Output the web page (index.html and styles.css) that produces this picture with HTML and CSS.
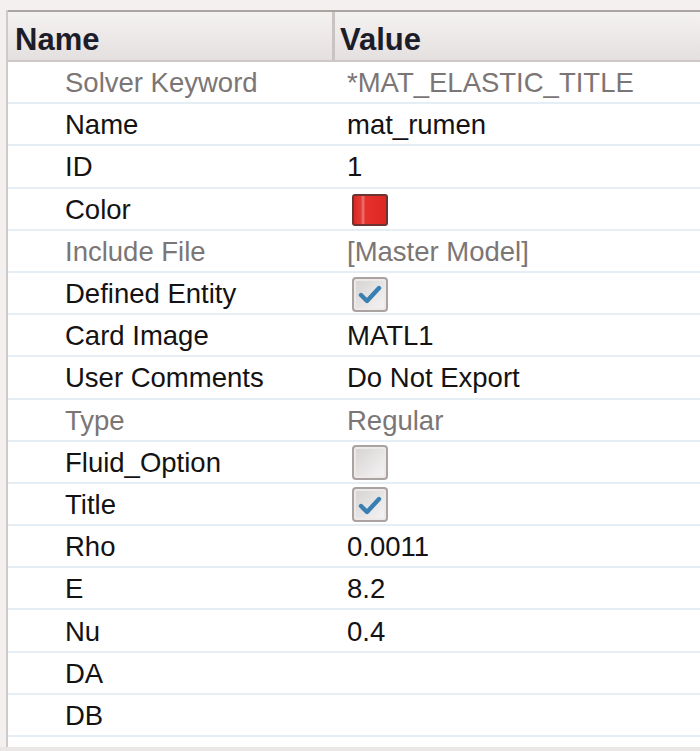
FILE: index.html
```html
<!DOCTYPE html>
<html>
<head>
<meta charset="utf-8">
<link rel="stylesheet" href="styles.css">
</head>
<body>
<div class="frame">
  <div class="panel">
    <div class="header">
      <div class="hcell hname">Name</div>
      <div class="hcell hvalue">Value</div>
    </div>
    <div class="row dim"><div class="name">Solver Keyword</div><div class="value">*MAT_ELASTIC_TITLE</div></div>
    <div class="row"><div class="name">Name</div><div class="value">mat_rumen</div></div>
    <div class="row"><div class="name">ID</div><div class="value">1</div></div>
    <div class="row"><div class="name">Color</div><div class="value"><span class="swatch"></span></div></div>
    <div class="row dim"><div class="name">Include File</div><div class="value">[Master Model]</div></div>
    <div class="row"><div class="name">Defined Entity</div><div class="value"><span class="check"><svg viewBox="0 0 24 24" width="24" height="24"><path d="M3 13 L9 19 L21 6" fill="none" stroke="#3a7fb2" stroke-width="4.4" stroke-linecap="round" stroke-linejoin="round"/></svg></span></div></div>
    <div class="row"><div class="name">Card Image</div><div class="value">MATL1</div></div>
    <div class="row"><div class="name">User Comments</div><div class="value">Do Not Export</div></div>
    <div class="row dim"><div class="name">Type</div><div class="value">Regular</div></div>
    <div class="row"><div class="name">Fluid_Option</div><div class="value"><span class="check"></span></div></div>
    <div class="row"><div class="name">Title</div><div class="value"><span class="check"><svg viewBox="0 0 24 24" width="24" height="24"><path d="M3 13 L9 19 L21 6" fill="none" stroke="#3a7fb2" stroke-width="4.4" stroke-linecap="round" stroke-linejoin="round"/></svg></span></div></div>
    <div class="row"><div class="name">Rho</div><div class="value">0.0011</div></div>
    <div class="row"><div class="name">E</div><div class="value">8.2</div></div>
    <div class="row"><div class="name">Nu</div><div class="value">0.4</div></div>
    <div class="row"><div class="name">DA</div><div class="value"></div></div>
    <div class="row"><div class="name">DB</div><div class="value"></div></div>
  </div>
</div>
</body>
</html>
```
FILE: styles.css
```css
html, body {
  margin: 0;
  padding: 0;
  background: #ebe7e6;
  overflow: hidden;
}
body {
  width: 700px;
  height: 751px;
  font-family: "Liberation Sans", Arial, sans-serif;
}
.frame {
  padding-top: 10px;
  padding-left: 6px;
  background: #f3f0ef;
  height: 737px;
}
.panel {
  width: 720px;
  height: 737px;
  background: #ffffff;
  border-left: 2px solid #cfcac8;
  box-sizing: border-box;
}
.header {
  display: flex;
  height: 52px;
  box-sizing: border-box;
  border-top: 2px solid #aaa4a2;
  border-bottom: 2px solid #cdc8c6;
  background: linear-gradient(#f4f2f1, #e4e0df);
}
.hcell {
  display: flex;
  align-items: center;
  padding-top: 8px;
  font-weight: bold;
  font-size: 31px;
  color: #1d1d2a;
  box-sizing: border-box;
}
.hname {
  width: 327px;
  padding-left: 7px;
  border-right: 3px solid #c9c4c2;
}
.hvalue {
  padding-left: 5px;
}
.row {
  display: flex;
  height: 42.2px;
  box-sizing: border-box;
  border-bottom: 2px solid #e5edf5;
  font-size: 27.5px;
  color: #141212;
  padding-top: 2px;
}
.row.dim {
  color: #7b7675;
}
.name {
  width: 330px;
  padding-left: 57px;
  display: flex;
  align-items: center;
  box-sizing: border-box;
}
.value {
  padding-left: 9px;
  display: flex;
  align-items: center;
  flex: 1;
}
.swatch {
  display: block;
  width: 36px;
  height: 32px;
  margin-left: 5px;
  box-sizing: border-box;
  border: 2px solid #6b3431;
  border-radius: 3px;
  background: linear-gradient(90deg, #d92a25 0%, #e43a35 22%, #f07670 28%, #e5302b 36%, #dc2723 100%);
}
.check {
  display: flex;
  align-items: center;
  justify-content: center;
  width: 36px;
  height: 35px;
  margin-left: 5px;
  box-sizing: border-box;
  border: 2px solid #aaa3a1;
  border-radius: 4px;
  background: linear-gradient(135deg, #d5d2d1, #f6f5f5);
  box-shadow: inset 0 0 0 2px #ece9e8;
}
```
